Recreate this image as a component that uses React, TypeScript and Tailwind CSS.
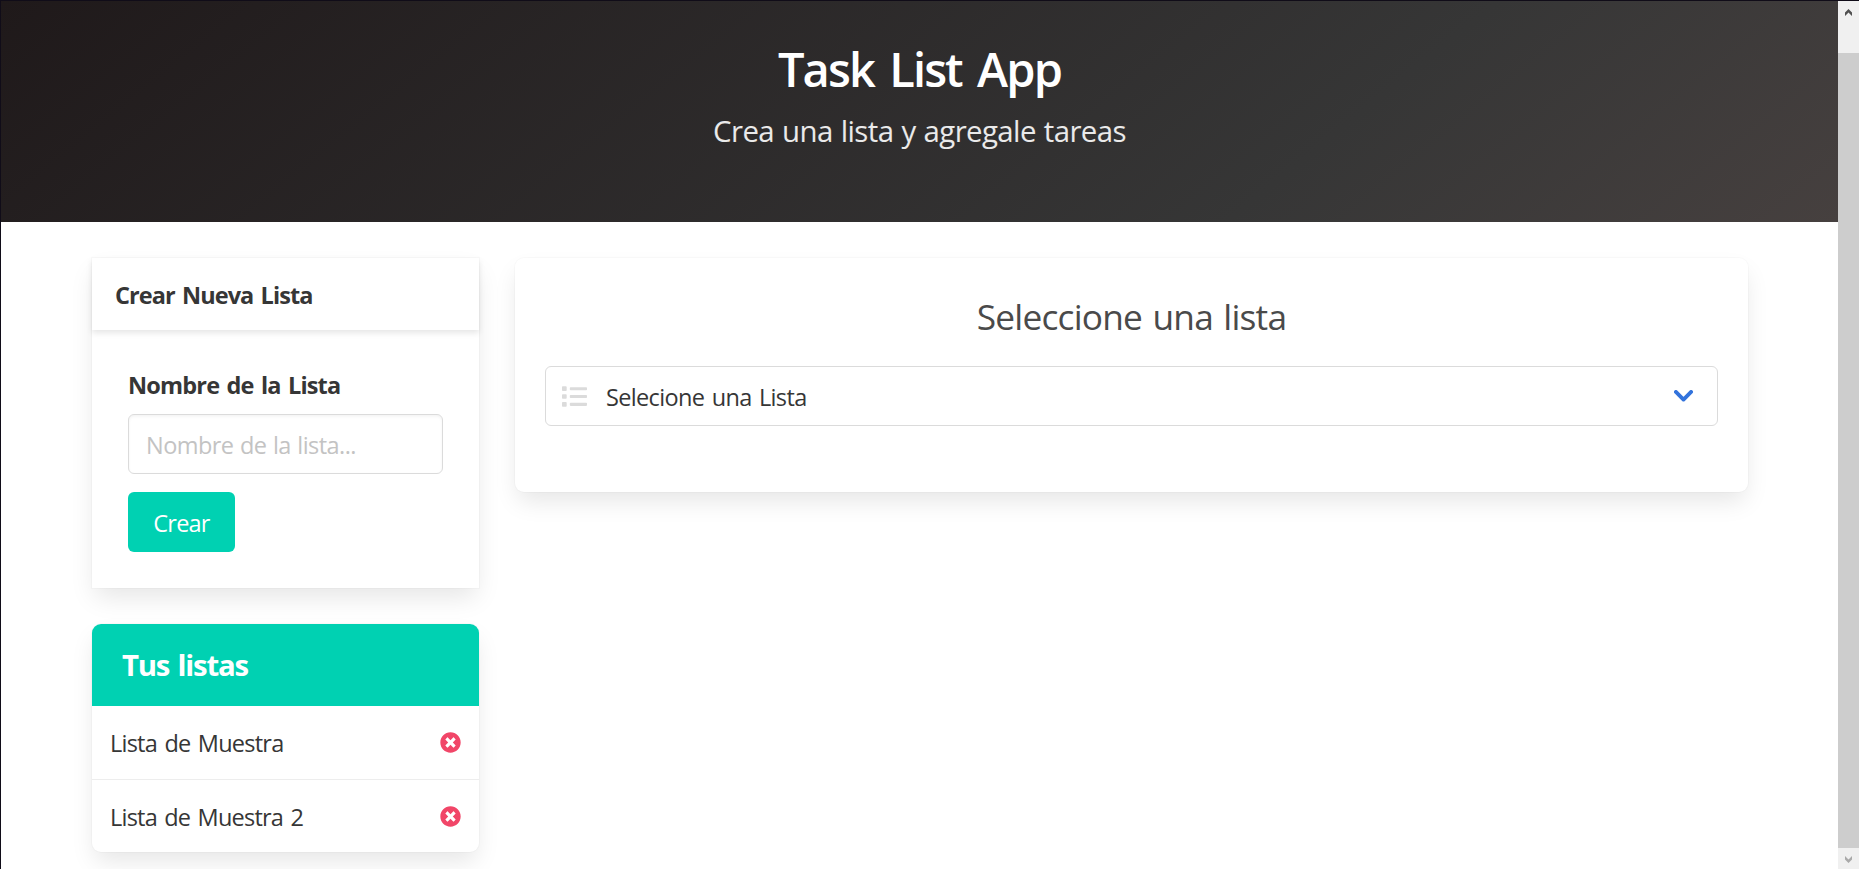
import { FaList, FaTimesCircle } from "react-icons/fa";

const lists = [
  { name: "Lista de Muestra", tracking: "tracking-[-0.76px]" },
  { name: "Lista de Muestra 2", tracking: "tracking-[-0.78px]" },
];

const cardShadow = "shadow-[0_12px_24px_-3px_rgba(10,10,10,0.1),0_0_0_1px_rgba(10,10,10,0.02)]";

function Hero() {
  return (
    <header className="flex h-[221px] flex-col items-center bg-[linear-gradient(141deg,#1f191a_0%,#363636_71%,#46403f_100%)] pt-[41px] text-white">
      <h1 className="text-[47px] leading-[54px] font-semibold tracking-[-1.9px] [word-spacing:5px]">Task List App</h1>
      <p className="mt-4 text-[29.4px] leading-[38px] font-[390] tracking-[-0.6px] [word-spacing:1px] text-white/90">
        Crea una lista y agregale tareas
      </p>
    </header>
  );
}

function NewListCard() {
  return (
    <section className={`h-[330px] bg-white ${cardShadow}`}>
      <h2 className="h-[72px] pl-[23px] text-[23.5px] leading-[75px] font-bold tracking-[-0.92px] [word-spacing:2px] text-[#363636] shadow-[0_3px_6px_rgba(10,10,10,0.1)]">
        Crear Nueva Lista
      </h2>
      <form className="flex flex-col items-start px-9 pt-9" onSubmit={(e) => e.preventDefault()}>
        <label className="h-12 text-[23.5px] leading-[39px] font-bold tracking-[-0.82px] [word-spacing:2px] text-[#363636]">
          Nombre de la Lista
        </label>
        <input
          placeholder="Nombre de la lista..."
          className="h-[60px] w-full rounded-md border border-[#dbdbdb] px-[17px] pt-0.5 text-[23.5px] font-[380] tracking-[-0.56px] [word-spacing:1px] shadow-[inset_0_1.5px_3px_rgba(10,10,10,0.05)] outline-none placeholder:text-[#c3c3c3]"
        />
        <button className="mt-[18px] h-[60px] w-[107px] rounded-md bg-[#00d1b2] pt-1 text-[23.5px] font-[390] tracking-[-0.8px] text-white">
          Crear
        </button>
      </form>
    </section>
  );
}

function ListsPanel() {
  return (
    <section className={`mt-9 overflow-hidden rounded-[9px] bg-white ${cardShadow}`}>
      <h2 className="h-[82px] bg-[#00d1b2] px-[30px] text-[29.4px] leading-[82px] font-bold tracking-[-1.24px] [word-spacing:2px] text-white">
        Tus listas
      </h2>
      <ul>
        {lists.map((list) => (
          <li
            key={list.name}
            className="flex h-[73px] items-center justify-between border-[#ededed] px-[18px] not-first:border-t"
          >
            <span className={`pt-[3px] text-[23.5px] font-[380] [word-spacing:2px] text-[#363636] ${list.tracking}`}>
              {list.name}
            </span>
            <FaTimesCircle className="size-[21px] text-[#f14668]" />
          </li>
        ))}
      </ul>
    </section>
  );
}

function SelectCard() {
  return (
    <section className={`flex h-[234px] flex-col rounded-[9px] bg-white px-[30px] ${cardShadow}`}>
      <h2 className="mt-[37px] text-center text-[35.3px] leading-[42px] font-[380] tracking-[-0.8px] [word-spacing:2px] text-[#4a4a4a]">
        Seleccione una lista
      </h2>
      <button className="mt-[29px] flex h-[60px] items-center rounded-md border border-[#dbdbdb] bg-white pr-6 pl-4">
        <FaList className="size-[25px] text-[#dbdbdb]" />
        <span className="ml-[19px] pt-[3px] text-[23.5px] font-[380] tracking-[-0.66px] [word-spacing:2px] text-[#363636]">
          Selecione una Lista
        </span>
        <svg viewBox="0 0 19 12" className="ml-auto h-3 w-[19px]" fill="none" stroke="#3273dc" strokeWidth="3.8">
          <path d="M1.9 1.9 9.5 9.6l7.6-7.7" strokeLinecap="round" strokeLinejoin="round" />
        </svg>
      </button>
    </section>
  );
}

function ScrollBar() {
  return (
    <div className="flex h-[868px] w-[21px] flex-col items-center bg-[#cdcdcd]">
      <div className="flex h-[52px] w-full justify-center bg-[#f0f0f0] pt-2">
        <svg viewBox="0 0 7 7" className="size-[7px]" fill="#505050">
          <path d="M0 3.5 3.5 0 7 3.5V7L3.5 3.5 0 7z" />
        </svg>
      </div>
      <div className="mt-auto flex h-[21px] w-full justify-center bg-[#f0f0f0] pt-2">
        <svg viewBox="0 0 7 7" className="size-[7px]" fill="#a9a9a9">
          <path d="M0 0 3.5 3.5 7 0v3.5L3.5 7 0 3.5z" />
        </svg>
      </div>
    </div>
  );
}

export default function App() {
  return (
    <div className="flex h-[869px] w-[1859px] overflow-hidden border-t border-l border-[#100c18] bg-white font-['Open_Sans',sans-serif]">
      <div className="h-full min-w-0 flex-1">
        <Hero />
        <main className="grid grid-cols-[387px_1233px] gap-9 pt-9 pl-[91px]">
          <div>
            <NewListCard />
            <ListsPanel />
          </div>
          <SelectCard />
        </main>
      </div>
      <ScrollBar />
    </div>
  );
}
